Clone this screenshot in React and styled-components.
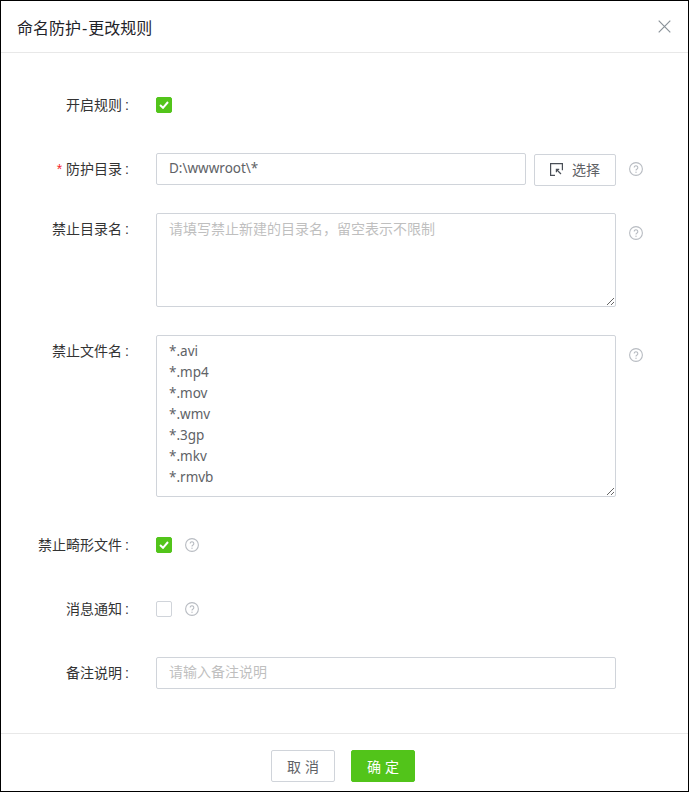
import React from 'react';
import styled, { createGlobalStyle } from 'styled-components';

const GlobalStyle = createGlobalStyle`
  html, body {
    margin: 0;
    padding: 0;
    background: #fff;
  }
  * {
    box-sizing: border-box;
  }
`;

const Dialog = styled.div`
  width: 689px;
  height: 792px;
  display: flex;
  flex-direction: column;
  background: #fff;
  border: 1px solid #000;
  font-family: "Liberation Sans", "Noto Sans CJK SC", sans-serif;
  font-size: 14px;
  color: #606266;
`;

const Header = styled.div`
  height: 52px;
  flex: none;
  display: flex;
  align-items: center;
  justify-content: space-between;
  padding: 0 17px 0 16px;
  border-bottom: 1px solid #e8e8e8;
`;

const Title = styled.div`
  font-size: 16px;
  color: #1f2329;
  font-weight: 400;
`;

const Dash = styled.span`
  margin: 0 1px;
`;

const CloseBtn = styled.button`
  width: 13px;
  height: 13px;
  margin-bottom: 1px;
  padding: 0;
  border: 0;
  background: none;
  display: flex;
  color: #8a9299;
`;

const Form = styled.div`
  flex: 1;
  display: flex;
  flex-direction: column;
  padding-top: 36px;
`;

const Row = styled.div`
  display: flex;
  align-items: flex-start;
  margin-bottom: ${(p) => p.$gap}px;
`;

const Label = styled.label`
  width: 128px;
  flex: none;
  height: 32px;
  line-height: 32px;
  text-align: right;
  color: #333;
  white-space: nowrap;
`;

const Colon = styled.span`
  margin-left: 3px;
`;

const Star = styled.span`
  color: #f5222d;
  margin-right: 4px;
`;

const Control = styled.div`
  margin-left: 27px;
  display: flex;
  align-items: flex-start;
`;

const CheckWrap = styled.div`
  height: 32px;
  display: flex;
  align-items: center;
`;

const Check = styled.span`
  width: 16px;
  height: 16px;
  border-radius: 2px;
  display: flex;
  align-items: center;
  justify-content: center;
  background: ${(p) => (p.$on ? '#52c41a' : '#fff')};
  border: 1px solid ${(p) => (p.$on ? '#52c41a' : '#d0d4da')};
`;

const TextInput = styled.input`
  width: ${(p) => p.$width}px;
  height: 32px;
  padding: 0 12px 2px;
  border: 1px solid #d0d4da;
  border-radius: 2px;
  outline: none;
  font-family: "Noto Sans", "Noto Sans CJK SC", sans-serif;
  font-size: 13.5px;
  color: #606266;
  &::placeholder {
    font-family: "Liberation Sans", "Noto Sans CJK SC", sans-serif;
    font-size: 14px;
    color: #bfbfbf;
    opacity: 1;
  }
`;

const TextArea = styled.textarea`
  display: block;
  width: 460px;
  height: ${(p) => p.$height}px;
  padding: 5px 12px 3px;
  border: 1px solid #d0d4da;
  border-radius: 2px;
  outline: none;
  font-family: "Noto Sans", "Noto Sans CJK SC", sans-serif;
  font-size: 13.5px;
  line-height: 21px;
  color: #606266;
  resize: vertical;
  overflow: hidden;
  &::placeholder {
    font-family: "Liberation Sans", "Noto Sans CJK SC", sans-serif;
    font-size: 14px;
    color: #bfbfbf;
    opacity: 1;
  }
`;

const PickBtn = styled.button`
  width: 82px;
  height: 32px;
  margin: 1px 0 -1px 8px;
  padding: 0 0 2px;
  display: flex;
  align-items: center;
  justify-content: center;
  gap: 9px;
  background: #fff;
  border: 1px solid #d0d4da;
  border-radius: 2px;
  font: inherit;
  color: #606266;
`;

const Help = styled.span`
  width: 14px;
  height: 32px;
  margin-left: 13px;
  margin-top: ${(p) => p.$top || 0}px;
  display: flex;
  align-items: center;
  color: #b8bcc2;
`;

const Footer = styled.div`
  height: 58px;
  flex: none;
  display: flex;
  justify-content: center;
  gap: 16px;
  padding: 16px 3px 0 0;
  border-top: 1px solid #e8e8e8;
`;

const FootBtn = styled.button`
  width: 64px;
  height: 32px;
  padding: 0;
  border-radius: 2px;
  font: inherit;
  letter-spacing: 4px;
  text-indent: 4px;
  color: ${(p) => (p.$primary ? '#fff' : '#606266')};
  background: ${(p) => (p.$primary ? '#52c41a' : '#fff')};
  border: 1px solid ${(p) => (p.$primary ? '#52c41a' : '#d0d4da')};
`;

const HelpIcon = () => (
  <svg width="14" height="14" viewBox="0 0 14 14" fill="none" stroke="currentColor">
    <circle cx="7" cy="7" r="6.4" strokeWidth="1.1" />
    <path d="M5.2 5.5a1.8 1.8 0 1 1 2.8 1.5c-.7.4-1 .8-1 1.5" strokeWidth="1.1" />
    <circle cx="7" cy="10.3" r=".7" fill="currentColor" stroke="none" />
  </svg>
);

const CheckIcon = () => (
  <svg width="10" height="8" viewBox="0 0 10 8" fill="none" stroke="#fff" strokeWidth="2">
    <path d="M1 4l3 2.8L9 1" />
  </svg>
);

const PickIcon = () => (
  <svg width="13" height="13" viewBox="0 0 13 13" fill="none" stroke="#4a4f57" strokeWidth="1.2">
    <path d="M5 12.4H.6V.6h11.8v6.6" />
    <path d="M6.5 6.5l4.5 4.5M6.4 9.2V6.4h2.8" />
  </svg>
);

const CloseIcon = () => (
  <svg width="13" height="13" viewBox="0 0 13 13" fill="none" stroke="currentColor" strokeWidth="1.2">
    <path d="M.7.7l11.6 11.6M12.3.7L.7 12.3" />
  </svg>
);

const fileNames = '*.avi\n*.mp4\n*.mov\n*.wmv\n*.3gp\n*.mkv\n*.rmvb';

const App = () => {
  return (
    <>
      <GlobalStyle />
      <Dialog>
        <Header>
          <Title>命名防护<Dash>-</Dash>更改规则</Title>
          <CloseBtn>
            <CloseIcon />
          </CloseBtn>
        </Header>
        <Form>
          <Row $gap={32}>
            <Label>开启规则<Colon>:</Colon></Label>
            <Control>
              <CheckWrap><Check $on><CheckIcon /></Check></CheckWrap>
            </Control>
          </Row>
          <Row $gap={28}>
            <Label><Star>*</Star>防护目录<Colon>:</Colon></Label>
            <Control>
              <TextInput $width={370} defaultValue="D:\wwwroot\*" />
              <PickBtn><PickIcon />选择</PickBtn>
              <Help><HelpIcon /></Help>
            </Control>
          </Row>
          <Row $gap={28}>
            <Label>禁止目录名<Colon>:</Colon></Label>
            <Control>
              <TextArea $height={94} placeholder="请填写禁止新建的目录名，留空表示不限制" />
              <Help $top={4}><HelpIcon /></Help>
            </Control>
          </Row>
          <Row $gap={32}>
            <Label>禁止文件名<Colon>:</Colon></Label>
            <Control>
              <TextArea $height={162} defaultValue={fileNames} />
              <Help $top={4}><HelpIcon /></Help>
            </Control>
          </Row>
          <Row $gap={32}>
            <Label>禁止畸形文件<Colon>:</Colon></Label>
            <Control>
              <CheckWrap><Check $on><CheckIcon /></Check></CheckWrap>
              <Help><HelpIcon /></Help>
            </Control>
          </Row>
          <Row $gap={32}>
            <Label>消息通知<Colon>:</Colon></Label>
            <Control>
              <CheckWrap><Check /></CheckWrap>
              <Help><HelpIcon /></Help>
            </Control>
          </Row>
          <Row $gap={0}>
            <Label>备注说明<Colon>:</Colon></Label>
            <Control>
              <TextInput $width={460} placeholder="请输入备注说明" />
            </Control>
          </Row>
        </Form>
        <Footer>
          <FootBtn>取消</FootBtn>
          <FootBtn $primary>确定</FootBtn>
        </Footer>
      </Dialog>
    </>
  );
};

export default App;
